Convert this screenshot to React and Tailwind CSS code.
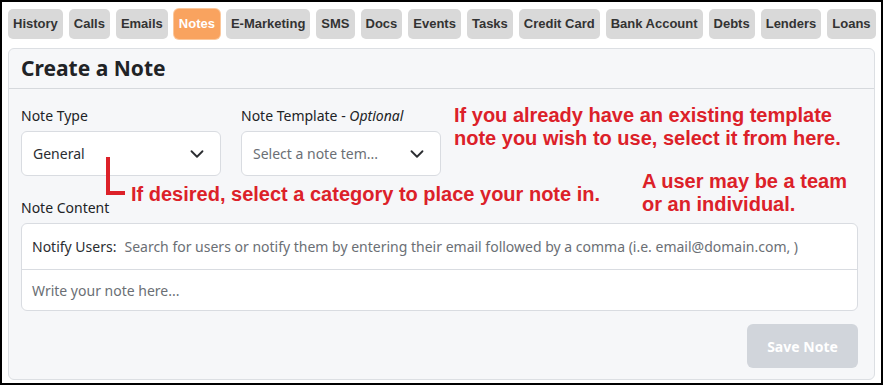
import { ChevronDown } from 'lucide-react';

const tabs = ['History', 'Calls', 'Emails', 'Notes', 'E-Marketing', 'SMS', 'Docs', 'Events', 'Tasks', 'Credit Card', 'Bank Account', 'Debts', 'Lenders', 'Loans'];

const ui = { fontFamily: '"Noto Sans", "Open Sans", sans-serif' };
const arial = { fontFamily: '"Liberation Sans", Arial, sans-serif' };

const Select = ({ value, placeholder }) => (
    <div className="w-[200px] h-[45px] bg-white border border-[#d9dce1] rounded-md flex items-center justify-between pl-[11px] pr-[12px]">
        <span className={`text-[14px] ${placeholder ? 'text-[#6b6f75]' : 'text-[#2b2d31]'}`}>{value}</span>
        <ChevronDown size={22} strokeWidth={2} className="text-[#2b2d31]" />
    </div>
);

const App = () => {
    return (
        <div className="relative w-[883px] h-[385px] border-2 border-black bg-white overflow-hidden" style={ui}>
            {/* Tabs */}
            <div className="flex gap-[6px] pl-[6px] pt-[7px]" style={arial}>
                {tabs.map((t) => (
                    <div
                        key={t}
                        className={`h-[30px] px-[5px] flex items-center rounded-[5px] text-[13px] font-bold ${t === 'Notes'
                            ? 'bg-[#f9a35f] text-white ring-1 ring-[#fbc79b]'
                            : 'bg-[#d9d9d9] text-[#333]'
                            }`}
                    >
                        {t}
                    </div>
                ))}
            </div>

            {/* Card */}
            <div className="mx-[6px] mt-[9px] h-[332px] bg-[#f6f7f9] border border-[#dcdfe3] rounded-md flex flex-col">
                <div className="h-[40px] border-b border-[#d6d9dd] px-[12px] flex items-center">
                    <h2 className="text-[21px] font-bold text-[#212326]">Create a Note</h2>
                </div>

                <div className="pl-[12px] pr-[16px] pt-[17px] flex flex-col">
                    <div className="flex gap-[20px]">
                        <div className="flex flex-col gap-[5px]">
                            <label className="text-[14px] text-[#212326] leading-[20px]">Note Type</label>
                            <Select value="General" />
                        </div>
                        <div className="flex flex-col gap-[5px]">
                            <label className="text-[14px] text-[#212326] leading-[20px]">
                                Note Template - <span className="italic">Optional</span>
                            </label>
                            <Select value="Select a note tem..." placeholder />
                        </div>
                    </div>

                    <label className="mt-[22px] text-[14px] text-[#212326] leading-[20px]">Note Content</label>

                    <div className="mt-[5px] bg-white border border-[#d9dce1] rounded-md flex flex-col">
                        <div className="h-[46px] border-b border-[#d9dce1] flex items-center px-[10px] text-[14px]">
                            <span className="text-[#2b2d31] mr-[8px]">Notify Users:</span>
                            <span className="text-[#6b6f75]">Search for users or notify them by entering their email followed by a comma (i.e. email@domain.com, )</span>
                        </div>
                        <div className="h-[40px] flex items-center px-[10px] text-[14px] text-[#6b6f75]">Write your note here...</div>
                    </div>

                    <div className="flex justify-end mt-[13px]">
                        <button className="w-[111px] h-[44px] rounded-md bg-[#d1d5db] text-white text-[14px] font-bold">Save Note</button>
                    </div>
                </div>
            </div>

            {/* Annotations */}
            <div className="absolute left-[452px] top-[102px] text-[20px] font-bold leading-[23px] text-[#dc2129]" style={arial}>
                If you already have an existing template<br />note you wish to use, select it from here.
            </div>
            <div className="absolute left-[104px] top-[155px] w-[4px] h-[38px] bg-[#dc2129]" />
            <div className="absolute left-[104px] top-[189px] w-[19px] h-[4px] bg-[#dc2129]" />
            <div className="absolute left-[129px] top-[181px] text-[20px] font-bold leading-[23px] text-[#dc2129]" style={arial}>
                If desired, select a category to place your note in.
            </div>
            <div className="absolute left-[640px] top-[168px] text-[20px] font-bold leading-[23px] text-[#dc2129]" style={arial}>
                A user may be a team<br />or an individual.
            </div>
        </div>
    );
};

export default App;
